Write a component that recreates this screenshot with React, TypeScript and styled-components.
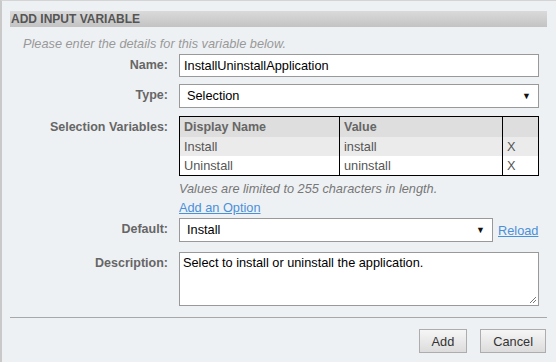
import styled, { createGlobalStyle } from "styled-components";

const GlobalStyle = createGlobalStyle`
  html, body {
    margin: 0;
    padding: 0;
    background: #eef1f4;
    font-family: "Liberation Sans", Arial, sans-serif;
  }
`;

const Panel = styled.div`
  box-sizing: border-box;
  width: 556px;
  height: 362px;
  border-left: 2px solid #c9c9c9;
  border-top: 1px solid #d4d4d4;
  padding: 10px 9px 0 8px;
  background: #eef1f4;
  overflow: hidden;
`;

const Header = styled.div`
  height: 16px;
  line-height: 16px;
  padding-left: 1px;
  background: linear-gradient(#dadada, #c3c3c3);
  color: #555;
  font-size: 12px;
  font-weight: bold;
`;

const Intro = styled.div`
  margin-top: 10px;
  padding-left: 13px;
  color: #999;
  font-size: 12.75px;
  font-style: italic;
  line-height: 14px;
`;

const Row = styled.div<{ $top: number }>`
  display: flex;
  align-items: flex-start;
  gap: 11px;
  margin-top: ${(p) => p.$top}px;
`;

const Label = styled.div`
  width: 158px;
  flex: none;
  text-align: right;
  color: #666;
  font-size: 12.5px;
  font-weight: bold;
  padding-top: 4px;
`;

const Field = styled.div`
  width: 360px;
  display: flex;
  flex-direction: column;
`;

const TextInput = styled.div`
  box-sizing: border-box;
  height: 23px;
  border: 1px solid #999;
  background: #fff;
  padding: 0 4px;
  font-size: 12.75px;
  line-height: 21px;
  color: #000;
`;

const Select = styled.div<{ $width: number }>`
  box-sizing: border-box;
  width: ${(p) => p.$width}px;
  height: 24px;
  border: 1px solid #999;
  background: #fff;
  padding: 0 7px;
  font-size: 12.75px;
  line-height: 22px;
  color: #000;
  display: flex;
  justify-content: space-between;
`;

const Arrow = styled.span`
  font-size: 9px;
  color: #111;
`;

const Table = styled.table`
  border-collapse: collapse;
  width: 360px;
  border: 1px solid #000;
  font-size: 12.75px;
  color: #555;
  td, th {
    padding: 0 4px;
    text-align: left;
    height: 19px;
    line-height: 18px;
  }
  th {
    color: #666;
    background: #dedede;
    height: 20px;
    font-size: 12.5px;
  }
  td + td, th + th {
    border-left: 1px solid #000;
  }
`;

const TRow = styled.tr<{ $alt?: boolean }>`
  background: ${(p) => (p.$alt ? "#ebebeb" : "#fff")};
`;

const Hint = styled.div`
  margin-top: 5px;
  font-size: 12.75px;
  font-style: italic;
  color: #777;
`;

const Link = styled.a`
  color: #4a90d9;
  text-decoration: underline;
  font-size: 12.75px;
  cursor: pointer;
`;

const OptionLink = styled(Link)`
  margin-top: 4px;
`;

const Inline = styled.div`
  display: flex;
  align-items: center;
  gap: 5px;
`;

const TextArea = styled.div`
  position: relative;
  box-sizing: border-box;
  height: 54px;
  border: 1px solid #999;
  background: #fff;
  padding: 2px 3px;
  font-size: 12.75px;
  color: #000;
`;

const Grip = styled.svg`
  position: absolute;
  right: 1px;
  bottom: 1px;
`;

const Rule = styled.div`
  margin-top: 11px;
  height: 1px;
  background: #a8a8a8;
  width: 537px;
`;

const Actions = styled.div`
  display: flex;
  justify-content: flex-end;
  gap: 13px;
  margin-top: 11px;
  padding-right: 1px;
`;

const Button = styled.button`
  box-sizing: border-box;
  height: 24px;
  padding: 0 12px;
  border: 1px solid #adadad;
  background: linear-gradient(#f6f6f6, #dcdcdc);
  font-family: "Liberation Sans", Arial, sans-serif;
  font-size: 12.75px;
  color: #333;
`;

export default function App() {
  return (
    <>
      <GlobalStyle />
      <Panel>
        <Header>ADD INPUT VARIABLE</Header>
        <Intro>Please enter the details for this variable below.</Intro>
        <Row $top={3}>
          <Label>Name:</Label>
          <Field>
            <TextInput>InstallUninstallApplication</TextInput>
          </Field>
        </Row>
        <Row $top={7}>
          <Label>Type:</Label>
          <Field>
            <Select $width={360}>
              Selection<Arrow>▼</Arrow>
            </Select>
          </Field>
        </Row>
        <Row $top={8}>
          <Label>Selection Variables:</Label>
          <Field>
            <Table>
              <thead>
                <tr>
                  <th style={{ width: 151 }}>Display Name</th>
                  <th style={{ width: 154 }}>Value</th>
                  <th />
                </tr>
              </thead>
              <tbody>
                <TRow $alt>
                  <td>Install</td>
                  <td>install</td>
                  <td>X</td>
                </TRow>
                <TRow>
                  <td>Uninstall</td>
                  <td>uninstall</td>
                  <td>X</td>
                </TRow>
              </tbody>
            </Table>
            <Hint>Values are limited to 255 characters in length.</Hint>
            <OptionLink>Add an Option</OptionLink>
          </Field>
        </Row>
        <Row $top={3}>
          <Label>Default:</Label>
          <Inline>
            <Select $width={314}>
              Install<Arrow>▼</Arrow>
            </Select>
            <Link>Reload</Link>
          </Inline>
        </Row>
        <Row $top={10}>
          <Label>Description:</Label>
          <Field>
            <TextArea>
              Select to install or uninstall the application.
              <Grip width="8" height="8" viewBox="0 0 8 8">
                <path d="M7 1 L1 7 M7 4 L4 7" stroke="#777" strokeWidth="1" />
              </Grip>
            </TextArea>
          </Field>
        </Row>
        <Rule />
        <Actions>
          <Button>Add</Button>
          <Button>Cancel</Button>
        </Actions>
      </Panel>
    </>
  );
}
